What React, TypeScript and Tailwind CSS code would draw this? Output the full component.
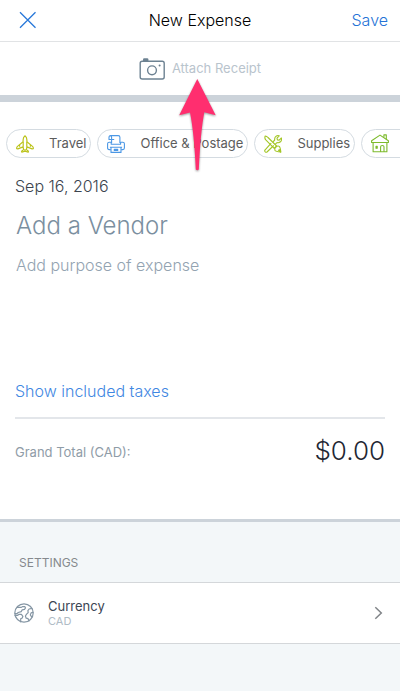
import { useState } from "react";
import type { ReactNode } from "react";

function CloseIcon() {
  return (
    <svg width="18" height="18" viewBox="19 10 18 18" fill="none" stroke="#2878d9" strokeWidth="1.3" aria-hidden="true">
      <path d="M20 11.2 35.5 26.8M35.5 11.2 20 26.8" />
    </svg>
  );
}

function CameraIcon() {
  return (
    <svg width="26" height="22" viewBox="138 57 26 22" fill="none" stroke="#6d8292" strokeWidth="1.4" aria-hidden="true">
      <rect x="139.2" y="60.2" width="24" height="17.8" rx="2" />
      <path d="M142 60.2v-1.6q0-1.3 1.2-1.3h3q1.2 0 1.2 1.3v1.6z" fill="#6d8292" stroke="none" />
      <circle cx="151" cy="69.3" r="4.4" />
      <circle cx="158.6" cy="64.5" r="1" fill="#6d8292" stroke="none" />
    </svg>
  );
}

function PlaneIcon() {
  return (
    <svg width="18" height="18" viewBox="0 0 18 18" fill="none" stroke="#bcc31c" strokeWidth="1.2" strokeLinejoin="round" aria-hidden="true">
      <path d="M9 .8C7.8 1.6 7.1 3 7.1 5v1.8L1.5 11.4Q.5 12.3.7 13.6l1.2.3 5.2-2 .5 2.7-2 1.7.2.9L9 16.1l3.2 1.1.2-.9-2-1.7.5-2.7 5.2 2 1.2-.3q.2-1.3-.8-2.2L10.9 6.8V5C10.9 3 10.2 1.6 9 .8z" />
      <path d="M9 14v2M3.6 9.8v2M14.4 9.8v2M7.2 7v4.8M10.8 7v4.8" />
    </svg>
  );
}

function PrinterIcon() {
  return (
    <svg width="18" height="18" viewBox="0 0 18 18" fill="none" stroke="#4b97e5" strokeWidth="1.1" strokeLinejoin="round" aria-hidden="true">
      <path d="M4.6 8V4.5H2V2.3Q2 .6 3.6.6h7.6q1.7 0 1.7 1.7V8M4.6 4.5V2.3Q4.6.8 3.4.8M4.6 4.5h2.6" />
      <path d="M3.8 14.6H2.2q-1.6 0-1.6-1.6V8.8q0-1.5 1.6-1.5h2v1.9h9.4V7.3h2.2q1.6 0 1.6 1.5V13q0 1.6-1.6 1.6h-1.6" />
      <path d="M2.9 12.3h12.2M4 12.5v4.9h10v-4.9M7.3 14.2h3.4v1.2H7.3z" />
    </svg>
  );
}

function ToolsIcon() {
  return (
    <svg width="18" height="18" viewBox="0 0 18 18" fill="none" stroke="#a3c626" strokeWidth="1.1" strokeLinejoin="round" aria-hidden="true">
      <path d="M7.2 8.2.9 15.1q-.5 1 .3 1.8.9.7 1.8.1l6.7-6.5" />
      <path d="M9 6.8 10.7 5Q10.3 2 12.4.9q1.4-.6 2.8-.1L13 3.1l.4 1.8 1.8.3 2.2-2.2q.6 2.2-.9 3.8-1.6 1.3-3.5.8l-1.9 1.8" />
      <path d="M1.2 1Q.3 3.3 1.8 4.9l8.4 8.4 2.4-2.3L4 2.5Q2.8 1.2 1.2 1z" />
      <path d="M11.6 12.2q-1.3 1.6-.7 3 .7 1.4 5.8 1.8-.2-4.5-1.5-5.6-1.3-1-3.6.8z" />
      <path d="m14.4 15.2 2.3 2-.3-2.8z" fill="#8fc01f" />
    </svg>
  );
}

function HouseIcon() {
  return (
    <svg width="18" height="19" viewBox="0 0 18 19" fill="none" stroke="#7dbb2c" strokeWidth="1.1" strokeLinejoin="round" aria-hidden="true">
      <path d="M9 1.1.6 6.8v1.7h16.8V6.8z" />
      <path d="M12.9 3.6V.9h2.4v4.4" />
      <path d="M2.1 8.7v9.1h13.8V8.7M9.6 17.7v-5q0-1.2 1.7-1.2t1.7 1.2v5" />
      <path d="M5 12.3h1.2v2H5z" fill="#7dbb2c" />
    </svg>
  );
}

function GlobeIcon() {
  return (
    <svg width="20" height="20" viewBox="0 0 20 20" fill="none" stroke="#8596a4" strokeWidth="1.2" strokeLinejoin="round" strokeLinecap="round" aria-hidden="true">
      <circle cx="10" cy="10" r="9.2" />
      <path d="M3.4 4.4h4l1-.8h2.4l.7 1.4-1 1.4-2.3.4-.9 1.8-3.1.9-1.1 1.1H1M1 12.4h2.4l1.4-1h2.6l1.5 1.9-.6 1.6-1.6.9v3" />
      <path d="M18 5.4l-2.9.6-1.2 1.6.3 2-1.6 1.6-1.2 1.8.8 2.2 1.8.4 1 2.3M19 9.4l-1.9.5-.8 2 1 1.5.9.2" />
    </svg>
  );
}

function Arrow() {
  return (
    <svg className="pointer-events-none absolute top-[77px] left-1/2 ml-[-23px] drop-shadow-[0_1px_1px_rgba(0,0,0,0.4)]" width="42" height="96" viewBox="177 77 42 96" fill="#ff2e6f" aria-hidden="true">
      <path d="M197.3 79 215.7 115.3 204.3 112.3Q200.5 132 198.8 169.5q-1.5 1.6-3 0Q194 132 190 112.4L179.2 115.2z" />
    </svg>
  );
}

const categories: { name: string; icon: ReactNode; iconOnly?: boolean }[] = [
  { name: "Travel", icon: <PlaneIcon /> },
  { name: "Office & Postage", icon: <PrinterIcon /> },
  { name: "Supplies", icon: <ToolsIcon /> },
  { name: "Home", icon: <HouseIcon />, iconOnly: true },
];

export default function App() {
  const [vendor, setVendor] = useState("");
  const [purpose, setPurpose] = useState("");

  return (
    <div className="relative flex min-h-screen flex-col overflow-hidden bg-[#f3f7f9] font-['Inter','Liberation_Sans',sans-serif] font-light">
      <header className="grid h-[42px] grid-cols-3 items-center border-b border-[#e1e3e5] bg-white px-3 pb-0.5">
        <button type="button" aria-label="Close" className="justify-self-start pl-[7px]">
          <CloseIcon />
        </button>
        <h1 className="justify-self-center text-base whitespace-nowrap text-black">New Expense</h1>
        <button type="button" className="justify-self-end text-base text-[#2473d6]">Save</button>
      </header>

      <button type="button" className="flex h-[53px] items-center justify-center gap-[7px] bg-white text-[13px] font-normal text-[#b9c4cd]">
        <CameraIcon />
        Attach Receipt
      </button>

      <main className="border-t-[7px] border-b-[3px] border-[#ccd3da] bg-white">
        <div className="mt-[27px] flex gap-1.5 overflow-hidden pl-1.5">
          {categories.map((category) => (
            <button
              key={category.name}
              type="button"
              aria-label={category.name}
              className="flex h-[29px] shrink-0 items-center gap-[15px] rounded-full border border-[#d4dbe1] pr-1 pl-[9px] text-[13px] whitespace-nowrap text-[#5c5c5c] last:w-[90px] font-normal"
            >
              {category.icon}
              {!category.iconOnly && category.name}
            </button>
          ))}
        </div>

        <div className="flex flex-col px-[15px]">
          <button type="button" className="mt-4 self-start text-base text-[#3c444e]">Sep 16, 2016</button>
          <input
            aria-label="Vendor"
            placeholder="Add a Vendor"
            value={vendor}
            onChange={(event) => setVendor(event.target.value)}
            className="mt-3 h-8 w-full px-px text-2xl text-[#3c444e] outline-none placeholder:text-[#7b8f9f]"
          />
          <input
            aria-label="Purpose of expense"
            placeholder="Add purpose of expense"
            value={purpose}
            onChange={(event) => setPurpose(event.target.value)}
            className="mt-[11px] h-6 w-full px-px text-base text-[#3c444e] outline-none placeholder:text-[#93a3b1]"
          />
          <button type="button" className="mt-[102px] self-start text-base text-[#3f87e2]">Show included taxes</button>
          <div className="mt-3.5 flex h-[102px] items-start justify-between border-t-2 border-[#e3e6ea] pt-4">
            <span className="pt-[7px] text-[13px] leading-5 font-normal text-[#8f9ca7]">Grand Total (CAD):</span>
            <span className="text-[26px] leading-8 text-[#1f2733]">$0.00</span>
          </div>
        </div>
      </main>

      <section>
        <h2 className="flex h-[60px] items-end px-[19px] pb-[9px] text-xs leading-5 font-normal text-[#85898d]">SETTINGS</h2>
        <button type="button" className="flex h-[62px] w-full items-center border-y border-[#d4d7da] bg-white pr-[17px] pl-3.5 text-left font-normal">
          <GlobeIcon />
          <span className="ml-3.5 flex flex-1 flex-col pb-px">
            <span className="text-[13px] leading-4 text-[#3c4653]">Currency</span>
            <span className="text-[11px] leading-[14px] text-[#b0bcc6]">CAD</span>
          </span>
          <svg width="9" height="14" viewBox="0 0 9 14" fill="none" stroke="#808488" strokeWidth="1.5" aria-hidden="true">
            <path d="m1.3 1.2 6 5.8-6 5.8" />
          </svg>
        </button>
      </section>

      <Arrow />
    </div>
  );
}
